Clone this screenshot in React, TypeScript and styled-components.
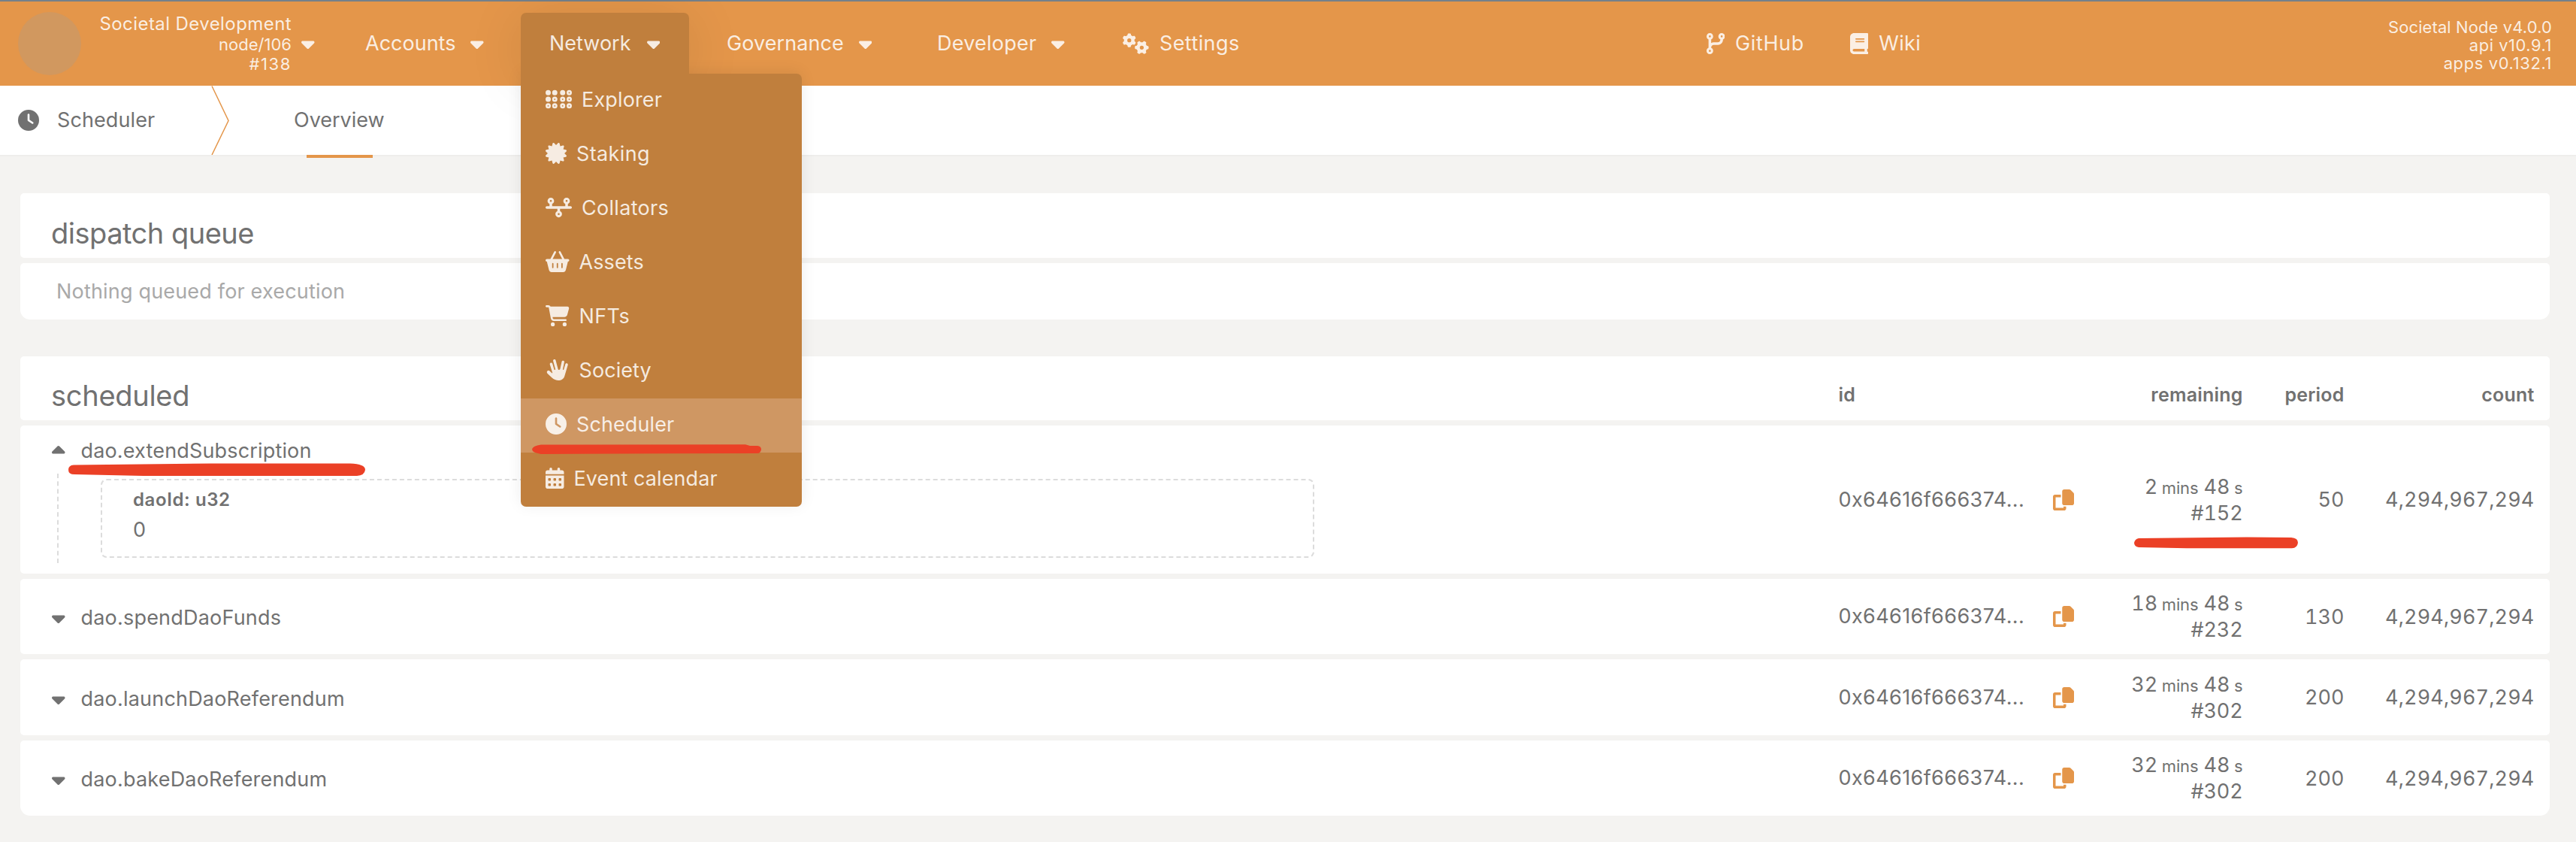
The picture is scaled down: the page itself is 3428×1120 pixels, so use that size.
import React from 'react';
import styled, { createGlobalStyle } from 'styled-components';
import {
  FaBasketShopping,
  FaBook,
  FaBraille,
  FaCalendarDays,
  FaCaretDown,
  FaCaretUp,
  FaCartShopping,
  FaCertificate,
  FaClock,
  FaCodeBranch,
  FaGears,
  FaHandSpock,
  FaTimeline,
} from 'react-icons/fa6';

const orange = '#e4964a';
const brown = '#c07f3d';
const text = '#717171';

const GlobalStyle = createGlobalStyle`
  * { box-sizing: border-box; }
  body {
    margin: 0;
    background: #f4f3f1;
    color: ${text};
    font: 400 27px/36px Inter, "Liberation Sans", sans-serif;
  }
  svg { display: block; flex: none; }
`;

const Page = styled.div`
  position: relative;
  width: 3428px;
  height: 1120px;
  overflow: hidden;
`;

const Icon = styled.span<{ $w?: number }>`
  display: inline-flex;
  flex: none;
  svg { width: ${(p) => p.$w ?? 28}px; height: 28px; }
`;

const Label = styled.span<{ $ls?: number }>`
  letter-spacing: ${(p) => p.$ls ?? 0}px;
  white-space: nowrap;
`;

/* ---- top bar ---- */

const TopBar = styled.header`
  display: flex;
  align-items: center;
  height: 114px;
  border-top: 2px solid #74808a;
  background: ${orange};
  color: rgba(255, 255, 255, 0.85);
`;

const ChainInfo = styled.div`
  display: flex;
  align-items: center;
  width: 446px;
  padding-left: 24px;
`;

const ChainLogo = styled.div`
  width: 84px;
  height: 84px;
  border-radius: 50%;
  background: #d1985f;
`;

const ChainText = styled.div`
  display: flex;
  flex-direction: column;
  align-items: flex-end;
  width: 280px;
  margin-right: 13px;
  padding-top: 2px;
  font-size: 22px;
  line-height: 26.5px;
`;

const ChainName = styled(Label)`
  font-size: 24px;
`;

const Nav = styled.nav`
  display: flex;
  align-self: flex-start;
  margin-top: 15px;
`;

const NavEntry = styled.div<{ $w: number }>`
  position: relative;
  width: ${(p) => p.$w}px;
`;

const NavItem = styled.div`
  display: flex;
  align-items: center;
  gap: 20px;
  height: 82px;
  padding-left: 40px;
`;

const ActiveEntry = styled(NavEntry)`
  z-index: 5;
  margin-right: 10px;
  &::before {
    content: '';
    position: absolute;
    inset: 0;
    border-radius: 7px;
    box-shadow: 0 8px 74px rgba(0, 0, 0, 0.1);
  }
`;

const ActiveItem = styled(NavItem)`
  position: relative;
  z-index: 2;
  padding-left: 38px;
  gap: 21px;
  border-radius: 7px 7px 0 0;
  background: ${brown};
`;

const LinkGroup = styled.div`
  display: flex;
  align-items: center;
  gap: 14px;
`;

const Links = styled.div`
  display: flex;
  gap: 61px;
  margin-left: 621px;
`;

const Versions = styled.div`
  display: flex;
  flex-direction: column;
  align-items: flex-end;
  margin-left: auto;
  padding: 3px 32px 0 0;
  font-size: 22px;
  line-height: 24px;
`;

const Menu = styled.div`
  position: absolute;
  z-index: 1;
  top: 81px;
  left: 0;
  width: 374px;
  border-radius: 0 7px 7px 7px;
  background: ${brown};
  box-shadow: 0 -2px 20px rgba(0, 0, 0, 0.08);
  overflow: hidden;
`;

const MenuItem = styled.div<{ $active?: boolean }>`
  display: flex;
  align-items: center;
  gap: 13px;
  height: 72px;
  padding: 0 0 2px 33px;
  background: ${(p) => (p.$active ? '#cf9763' : 'transparent')};
  ${Icon} { margin-bottom: 2px; }
`;

/* ---- tabs ---- */

const TabBar = styled.div`
  display: flex;
  align-items: center;
  height: 94px;
  border-bottom: 2px solid #efeeec;
  background: #fff;
`;

const SectionTitle = styled.div`
  display: flex;
  align-items: center;
  gap: 24px;
  width: 281px;
  padding-left: 24px;
`;

const Tab = styled.div`
  position: relative;
  display: flex;
  align-items: center;
  height: 94px;
  margin-left: 86px;
  &::after {
    content: '';
    position: absolute;
    left: 17px;
    bottom: -3px;
    width: 88px;
    height: 4px;
    background: ${orange};
  }
`;

/* ---- tables ---- */

const Main = styled.main`
  display: flex;
  flex-direction: column;
  gap: 49px;
  padding: 49px 35px 0 27px;
`;

const Table = styled.section`
  display: flex;
  flex-direction: column;
  gap: 7px;
`;

const Row = styled.div<{ $h: number; $last?: boolean }>`
  display: flex;
  align-items: center;
  height: ${(p) => p.$h}px;
  padding: 0 20.5px 0 42px;
  border-radius: ${(p) => (p.$last ? '5px 5px 13px 13px' : '5px')};
  background: #fff;
`;

const Heading = styled.h1<{ $ls: number }>`
  flex: 1;
  margin: 0 0 0 -1px;
  padding-top: 19px;
  font-size: 38px;
  font-weight: 400;
  line-height: 46px;
  letter-spacing: ${(p) => p.$ls}px;
`;

const Empty = styled.div`
  padding-left: 6px;
  color: #a9a9a9;
  letter-spacing: 0.18px;
`;

const HeadCell = styled.div<{ $w: number; $left?: boolean }>`
  width: ${(p) => p.$w}px;
  padding-top: 16px;
  font-size: 25px;
  font-weight: 600;
  letter-spacing: 0.2px;
  text-align: ${(p) => (p.$left ? 'left' : 'right')};
`;

const Call = styled.div`
  flex: 1;
  display: flex;
  align-items: center;
  gap: 21px;
  padding-top: 4px;
`;

const OpenCall = styled.div`
  flex: 1;
  align-self: stretch;
  padding-top: 16px;
`;

const CallSummary = styled.div`
  display: flex;
  align-items: center;
  gap: 21px;
  height: 36px;
`;

const Params = styled.div`
  margin: 12px 0 0 7px;
  padding: 7px 0 7px 56px;
  border-left: 2px dashed #dcdcdc;
`;

const ParamBox = styled.div`
  width: 1615px;
  height: 105px;
  padding: 10px 0 0 41px;
  border: 2px dashed #dcdcdc;
  border-radius: 8px;
  line-height: 32px;
`;

const ParamName = styled.div`
  margin-bottom: 8px;
  font-size: 24px;
  font-weight: 600;
  letter-spacing: 0.6px;
`;

const IdCell = styled.div`
  width: 285px;
  letter-spacing: 0.4px;
`;

const CopyButton = styled(Icon)`
  width: 29px;
  color: ${orange};
`;

const NumberCell = styled.div<{ $w: number; $ls?: number }>`
  width: ${(p) => p.$w}px;
  line-height: 33px;
  letter-spacing: ${(p) => p.$ls ?? 0}px;
  text-align: right;
  font-variant-numeric: tabular-nums;
`;

const Unit = styled.span`
  font-size: 22px;
`;

const Mark = styled.svg<{ $x: number; $y: number }>`
  position: absolute;
  z-index: 10;
  left: ${(p) => p.$x}px;
  top: ${(p) => p.$y}px;
  fill: #eb4026;
`;

const CopyGlyph = () => (
  <svg viewBox="0 0 512 512" fill="currentColor">
    <path d="M272 0H396.100c12.700 0 24.900 5.100 33.900 14.100l67.900 67.900c9 9 14.100 21.200 14.100 33.900V336c0 26.500-21.500 48-48 48H272c-26.500 0-48-21.500-48-48V48c0-26.500 21.500-48 48-48zM48 128H192v64H64V448H256V416h64v48c0 26.500-21.500 48-48 48H48c-26.500 0-48-21.500-48-48V176c0-26.500 21.500-48 48-48z" />
  </svg>
);

const Caret = ({ up }: { up?: boolean }) => (
  <Icon $w={17.5}>{up ? <FaCaretUp /> : <FaCaretDown />}</Icon>
);

const menu = [
  { icon: <FaBraille />, w: 35, label: 'Explorer', ls: 0.15 },
  { icon: <FaCertificate />, w: 28, label: 'Staking', ls: 0.37 },
  { icon: <FaTimeline />, w: 35, label: 'Collators', ls: 0.3 },
  { icon: <FaBasketShopping />, w: 31.5, label: 'Assets', ls: 0.11 },
  { icon: <FaCartShopping />, w: 31.5, label: 'NFTs', ls: 0.4 },
  { icon: <FaHandSpock />, w: 31.5, label: 'Society', ls: 0.07 },
  { icon: <FaClock />, w: 28, label: 'Scheduler', ls: 0.1, active: true },
  { icon: <FaCalendarDays />, w: 24.5, label: 'Event calendar', ls: 0.09 },
];

const calls = [
  { name: 'dao.extendSubscription', mins: 2, block: 152, period: 50, h: 197, open: true },
  { name: 'dao.spendDaoFunds', mins: 18, block: 232, period: 130, h: 100 },
  { name: 'dao.launchDaoReferendum', mins: 32, block: 302, period: 200, h: 101 },
  { name: 'dao.bakeDaoReferendum', mins: 32, block: 302, period: 200, h: 100, last: true },
];

export default function App() {
  return (
    <Page>
      <GlobalStyle />
      <TopBar>
        <ChainInfo>
          <ChainLogo />
          <ChainText>
            <ChainName $ls={0.42}>Societal Development</ChainName>
            <Label>node/106</Label>
            <Label $ls={1.6}>#138</Label>
          </ChainText>
          <Caret />
        </ChainInfo>
        <Nav>
          <NavEntry $w={247}>
            <NavItem><Label>Accounts</Label><Caret /></NavItem>
          </NavEntry>
          <ActiveEntry $w={224}>
            <ActiveItem><Label>Network</Label><Caret /></ActiveItem>
            <Menu>
              {menu.map((m) => (
                <MenuItem key={m.label} $active={m.active}>
                  <Icon $w={m.w}>{m.icon}</Icon>
                  <Label $ls={m.ls}>{m.label}</Label>
                </MenuItem>
              ))}
            </Menu>
          </ActiveEntry>
          <NavEntry $w={280}>
            <NavItem><Label $ls={0.08}>Governance</Label><Caret /></NavItem>
          </NavEntry>
          <NavEntry $w={287}>
            <NavItem><Label $ls={0.24}>Developer</Label><Caret /></NavItem>
          </NavEntry>
        </Nav>
        <LinkGroup><Icon $w={35}><FaGears /></Icon><Label $ls={0.4}>Settings</Label></LinkGroup>
        <Links>
          <LinkGroup><Icon $w={24.5}><FaCodeBranch /></Icon><Label $ls={0.6}>GitHub</Label></LinkGroup>
          <LinkGroup><Icon $w={24.5}><FaBook /></Icon><Label $ls={0.35}>Wiki</Label></LinkGroup>
        </Links>
        <Versions>
          <Label $ls={0.1}>Societal Node v4.0.0</Label>
          <Label $ls={0.5}>api v10.9.1</Label>
          <Label $ls={0.6}>apps v0.132.1</Label>
        </Versions>
      </TopBar>
      <TabBar>
        <SectionTitle>
          <Icon><FaClock /></Icon>
          <Label $ls={0.1}>Scheduler</Label>
        </SectionTitle>
        <svg width="24" height="92" viewBox="0 0 24 92">
          <path d="M1 0.5 L23 46.5 L1 92" fill="none" stroke={orange} strokeWidth="1.5" />
        </svg>
        <Tab><Label>Overview</Label></Tab>
      </TabBar>
      <Main>
        <Table>
          <Row $h={86}><Heading $ls={-0.5}>dispatch queue</Heading></Row>
          <Row $h={75} $last><Empty>Nothing queued for execution</Empty></Row>
        </Table>
        <Table>
          <Row $h={85}>
            <Heading $ls={-0.28}>scheduled</Heading>
            <HeadCell $w={314} $left>id</HeadCell>
            <HeadCell $w={224}>remaining</HeadCell>
            <HeadCell $w={135}>period</HeadCell>
            <HeadCell $w={253}>count</HeadCell>
          </Row>
          {calls.map((c) => (
            <Row key={c.name} $h={c.h} $last={c.last}>
              {c.open ? (
                <OpenCall>
                  <CallSummary><Caret up /><Label $ls={0.16}>{c.name}</Label></CallSummary>
                  <Params>
                    <ParamBox>
                      <ParamName>daoId: u32</ParamName>
                      0
                    </ParamBox>
                  </Params>
                </OpenCall>
              ) : (
                <Call><Caret /><Label $ls={0.2}>{c.name}</Label></Call>
              )}
              <IdCell>0x64616f666374...</IdCell>
              <CopyButton><CopyGlyph /></CopyButton>
              <NumberCell $w={224} $ls={-0.15}>
                {c.mins}<Unit> mins</Unit> 48<Unit> s</Unit>
                <br />#{c.block}
              </NumberCell>
              <NumberCell $w={135}>{c.period}</NumberCell>
              <NumberCell $w={253} $ls={0.12}>4,294,967,294</NumberCell>
            </Row>
          ))}
        </Table>
      </Main>
      <Mark $x={708} $y={590} width="306" height="15">
        <path d="M12 1.5 L284 1.2 L290 3 H300 Q305 3.5 305 8 Q304 13 300 13 L180 13.2 L12 14 Q0 12 0 7.5 Q1 3 12 1.5 Z" />
      </Mark>
      <Mark $x={91} $y={615} width="396" height="19">
        <path d="M7 3.5 L190 1.5 L375 1.5 Q395 2 395 10 Q394 17.500 384 18 L100 18 L8 16 Q0 16 0 10 Q0 4 7 3.5 Z" />
      </Mark>
      <Mark $x={2840} $y={714} width="219" height="17">
        <path d="M6 2 L150 0.5 L209 1 Q218 1.5 218 8 Q217 15 210 15.2 L70 15.2 L6 14 Q0 13 0 8 Q1 3 6 2 Z" />
      </Mark>
    </Page>
  );
}
